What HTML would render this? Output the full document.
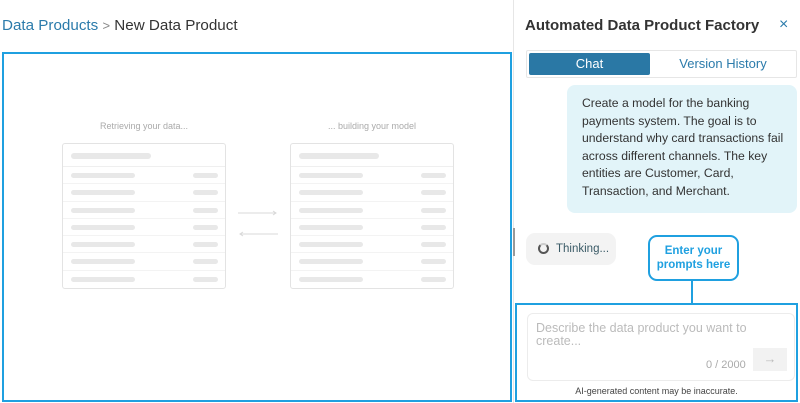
<!DOCTYPE html>
<html><head><meta charset="utf-8"><style>
*{box-sizing:border-box;margin:0;padding:0}
body{width:800px;height:403px;background:#fff;font-family:"Liberation Sans",sans-serif;position:relative;overflow:hidden}
.a{position:absolute}
.card{position:absolute;width:164px;height:146px;border:1px solid #e3e3e3;border-radius:3px;background:#fff}
.hd{height:23px;border-bottom:1px solid #efefef;position:relative}
.row{height:17.3px;border-bottom:1px solid #f3f3f3;position:relative}
.row:last-child{border-bottom:none}
.bar{position:absolute;background:#e8e8e8;border-radius:3px;height:5px}
</style></head><body>
<div class="a" style="left:2px;top:17px;font-size:15.2px;color:#2b7bab">Data Products <span style="color:#888;font-size:13px">&gt;</span> <span style="color:#333">New Data Product</span></div>
<div class="a" style="left:2px;top:52px;width:510px;height:350px;border:2px solid #1fa0e0"></div>
<div class="a" style="left:62px;top:121px;width:164px;text-align:center;font-size:9px;color:#aaa">Retrieving your data...</div>
<div class="a" style="left:290px;top:121px;width:164px;text-align:center;font-size:9px;color:#aaa">... building your model</div>
<div class="card" style="left:62px;top:143px"><div class="hd"><div class="bar" style="left:8px;top:9px;width:80px;height:6px"></div></div>
<div class="row"><div class="bar" style="left:8px;top:6px;width:64px"></div><div class="bar" style="left:130px;top:6px;width:25px"></div></div>
<div class="row"><div class="bar" style="left:8px;top:6px;width:64px"></div><div class="bar" style="left:130px;top:6px;width:25px"></div></div>
<div class="row"><div class="bar" style="left:8px;top:6px;width:64px"></div><div class="bar" style="left:130px;top:6px;width:25px"></div></div>
<div class="row"><div class="bar" style="left:8px;top:6px;width:64px"></div><div class="bar" style="left:130px;top:6px;width:25px"></div></div>
<div class="row"><div class="bar" style="left:8px;top:6px;width:64px"></div><div class="bar" style="left:130px;top:6px;width:25px"></div></div>
<div class="row"><div class="bar" style="left:8px;top:6px;width:64px"></div><div class="bar" style="left:130px;top:6px;width:25px"></div></div>
<div class="row"><div class="bar" style="left:8px;top:6px;width:64px"></div><div class="bar" style="left:130px;top:6px;width:25px"></div></div></div>
<div class="card" style="left:290px;top:143px"><div class="hd"><div class="bar" style="left:8px;top:9px;width:80px;height:6px"></div></div>
<div class="row"><div class="bar" style="left:8px;top:6px;width:64px"></div><div class="bar" style="left:130px;top:6px;width:25px"></div></div>
<div class="row"><div class="bar" style="left:8px;top:6px;width:64px"></div><div class="bar" style="left:130px;top:6px;width:25px"></div></div>
<div class="row"><div class="bar" style="left:8px;top:6px;width:64px"></div><div class="bar" style="left:130px;top:6px;width:25px"></div></div>
<div class="row"><div class="bar" style="left:8px;top:6px;width:64px"></div><div class="bar" style="left:130px;top:6px;width:25px"></div></div>
<div class="row"><div class="bar" style="left:8px;top:6px;width:64px"></div><div class="bar" style="left:130px;top:6px;width:25px"></div></div>
<div class="row"><div class="bar" style="left:8px;top:6px;width:64px"></div><div class="bar" style="left:130px;top:6px;width:25px"></div></div>
<div class="row"><div class="bar" style="left:8px;top:6px;width:64px"></div><div class="bar" style="left:130px;top:6px;width:25px"></div></div></div>
<svg class="a" style="left:236px;top:208px" width="44" height="32"><path d="M2 5H40M37 3L40 5L37 7M4 26H42M7 24L4 26L7 28" stroke="#d8d8d8" fill="none" stroke-width="1"/></svg>
<div class="a" style="left:513px;top:0;width:1px;height:403px;background:#e6e6e6"></div>
<div class="a" style="left:513px;top:228px;width:2px;height:28px;background:#999"></div>
<div class="a" style="left:525px;top:17px;font-size:15px;font-weight:bold;color:#333">Automated Data Product Factory</div>
<div class="a" style="left:779px;top:16px;font-size:16px;color:#2b7bab">×</div>
<div class="a" style="left:526px;top:50px;width:271px;height:28px;border:1px solid #e6e6e6;border-radius:2px"></div>
<div class="a" style="left:529px;top:53px;width:121px;height:22px;background:#2a78a5;border-radius:2px;color:#fff;font-size:13px;text-align:center;line-height:22px">Chat</div>
<div class="a" style="left:650px;top:53px;width:146px;height:22px;color:#2b7bab;font-size:13px;text-align:center;line-height:22px">Version History</div>
<div class="a" style="left:567px;top:85px;width:230px;height:128px;background:#e2f4f9;border-radius:8px;padding:10px 10px 0 15px;font-size:12.2px;line-height:17.5px;color:#333">Create a model for the banking payments system. The goal is to understand why card transactions fail across different channels. The key entities are Customer, Card, Transaction, and Merchant.</div>
<div class="a" style="left:526px;top:233px;width:90px;height:32px;background:#f3f3f3;border-radius:9px;font-size:11.5px;color:#3a5a66;line-height:32px;padding-left:30px">Thinking...</div>
<div class="a" style="left:538px;top:243px;width:11px;height:11px;border:2px solid #555;border-top-color:#ccc;border-radius:50%"></div>
<div class="a" style="left:648px;top:235px;width:91px;height:46px;border:2px solid #1fa0e0;border-radius:9px;color:#1fa0e0;font-size:11.5px;font-weight:bold;text-align:center;line-height:14px;padding-top:7px">Enter your<br>prompts here</div>
<div class="a" style="left:691px;top:281px;width:2px;height:23px;background:#1fa0e0"></div>
<div class="a" style="left:515px;top:303px;width:283px;height:99px;border:2px solid #1fa0e0"></div>
<div class="a" style="left:527px;top:313px;width:268px;height:68px;border:1px solid #ececec;border-radius:6px"></div>
<div class="a" style="left:536px;top:322px;width:220px;font-size:12.5px;line-height:13px;color:#bbb">Describe the data product you want to create...</div>
<div class="a" style="left:706px;top:359px;font-size:11px;color:#aaa">0 / 2000</div>
<div class="a" style="left:753px;top:348px;width:34px;height:23px;background:#f2f2f2;color:#bbb;font-size:13px;text-align:center;line-height:22px">→</div>
<div class="a" style="left:515px;top:386px;width:283px;text-align:center;font-size:9px;color:#444">AI-generated content may be inaccurate.</div>
</body></html>
